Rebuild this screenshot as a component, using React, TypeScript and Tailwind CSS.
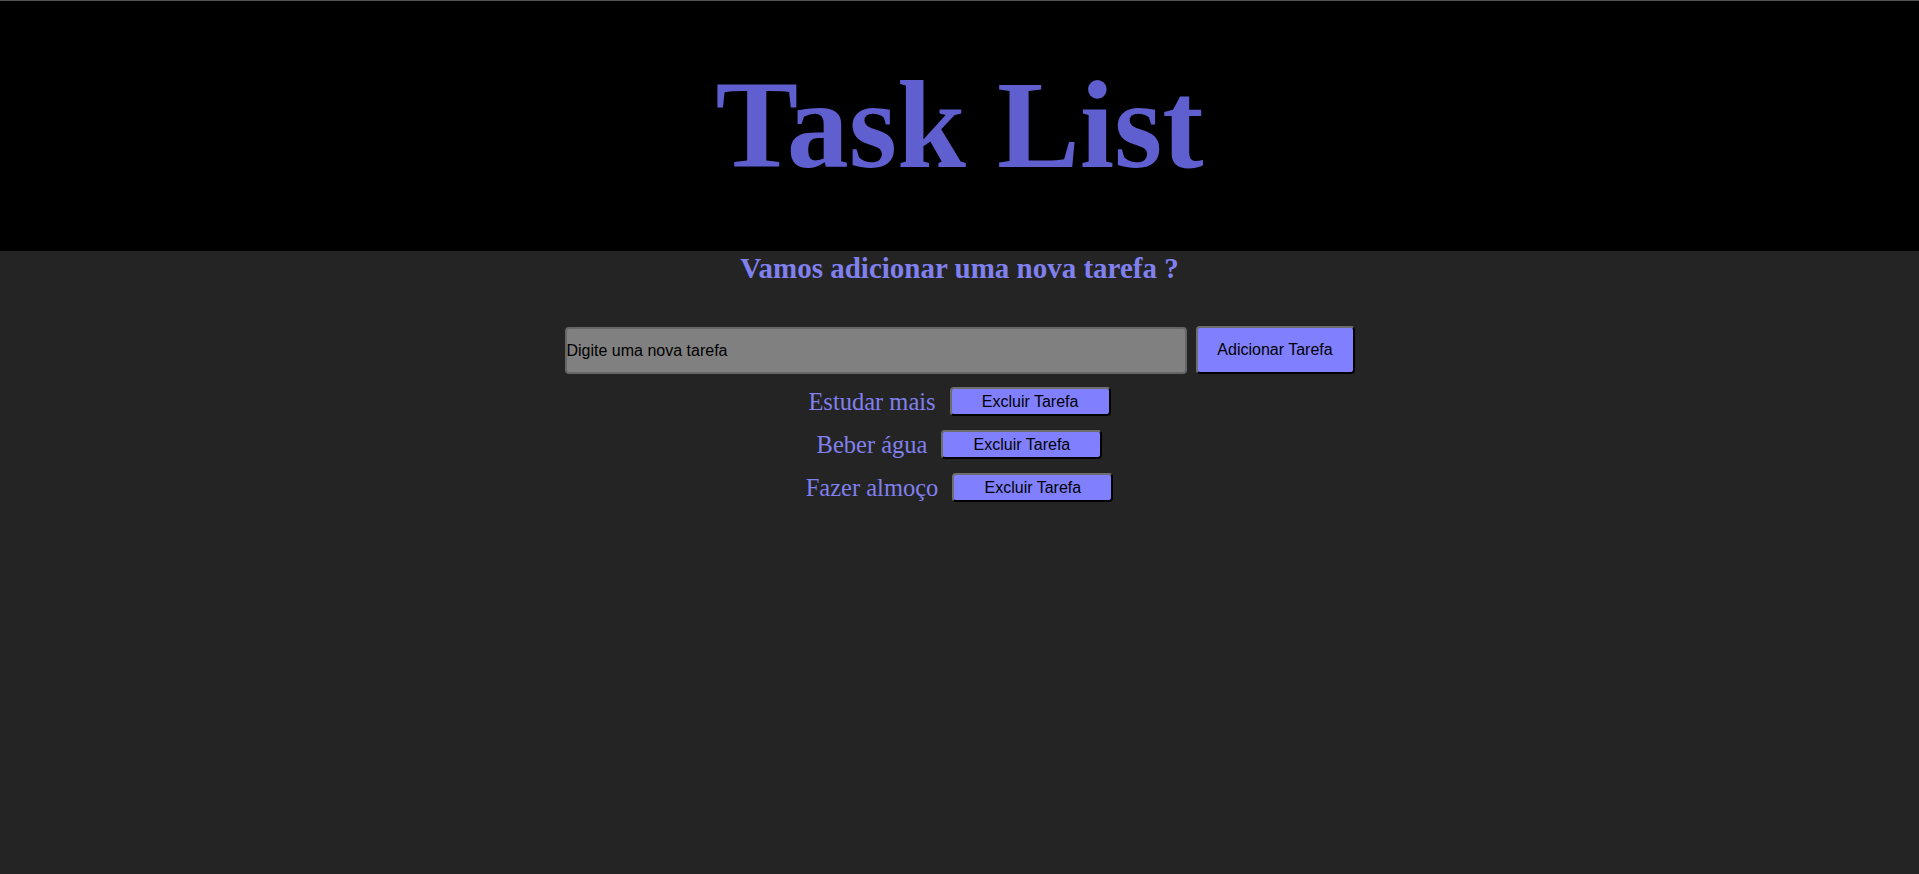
import React from "react";

const tasks = ["Estudar mais", "Beber água", "Fazer almoço"];

export default function App() {
  return (
    <div className="min-h-[874px] w-full bg-[#242424]">
      <header className="flex h-[251px] items-center justify-center border-t border-[#555555] bg-black">
        <h1
          className="m-0 text-[124px] font-bold leading-none text-[#5f5fd0]"
          style={{ fontFamily: '"Liberation Serif", "Times New Roman", serif' }}
        >
          Task List
        </h1>
      </header>
      <main className="flex flex-col items-center">
        <h2
          className="m-0 text-[29px] font-bold leading-[34px] text-[#8080ee]"
          style={{ fontFamily: '"Liberation Serif", "Times New Roman", serif' }}
        >
          Vamos adicionar uma nova tarefa ?
        </h2>
        <div
          className="mt-[41px] flex items-end gap-[9px]"
          style={{ fontFamily: '"Liberation Sans", Arial, sans-serif' }}
        >
          <input
            type="text"
            placeholder="Digite uma nova tarefa"
            className="h-[47px] w-[622px] rounded-[4px] border-2 border-solid border-[#666666] bg-[#808080] p-0 text-[16px] text-black outline-none placeholder:text-black"
          />
          <button className="h-[48px] w-[159px] rounded-[4px] border-2 border-solid border-t-[#6e6e6e] border-l-[#6e6e6e] border-b-black border-r-black bg-[#8080ff] text-[16px] text-black">
            Adicionar Tarefa
          </button>
        </div>
        <ul className="m-0 mt-[13px] flex list-none flex-col items-center gap-[14px] p-0">
          {tasks.map((t) => (
            <li key={t} className="flex h-[29px] items-center gap-[14px]">
              <span
                className="text-[24.5px] leading-[29px] text-[#8080ee]"
                style={{ fontFamily: '"Liberation Serif", "Times New Roman", serif' }}
              >
                {t}
              </span>
              <button
                className="h-[29px] w-[161px] rounded-[4px] border-2 border-solid border-t-[#6e6e6e] border-l-[#6e6e6e] border-b-black border-r-black bg-[#8080ff] text-[16px] leading-none text-black"
                style={{ fontFamily: '"Liberation Sans", Arial, sans-serif' }}
              >
                Excluir Tarefa
              </button>
            </li>
          ))}
        </ul>
      </main>
    </div>
  );
}
